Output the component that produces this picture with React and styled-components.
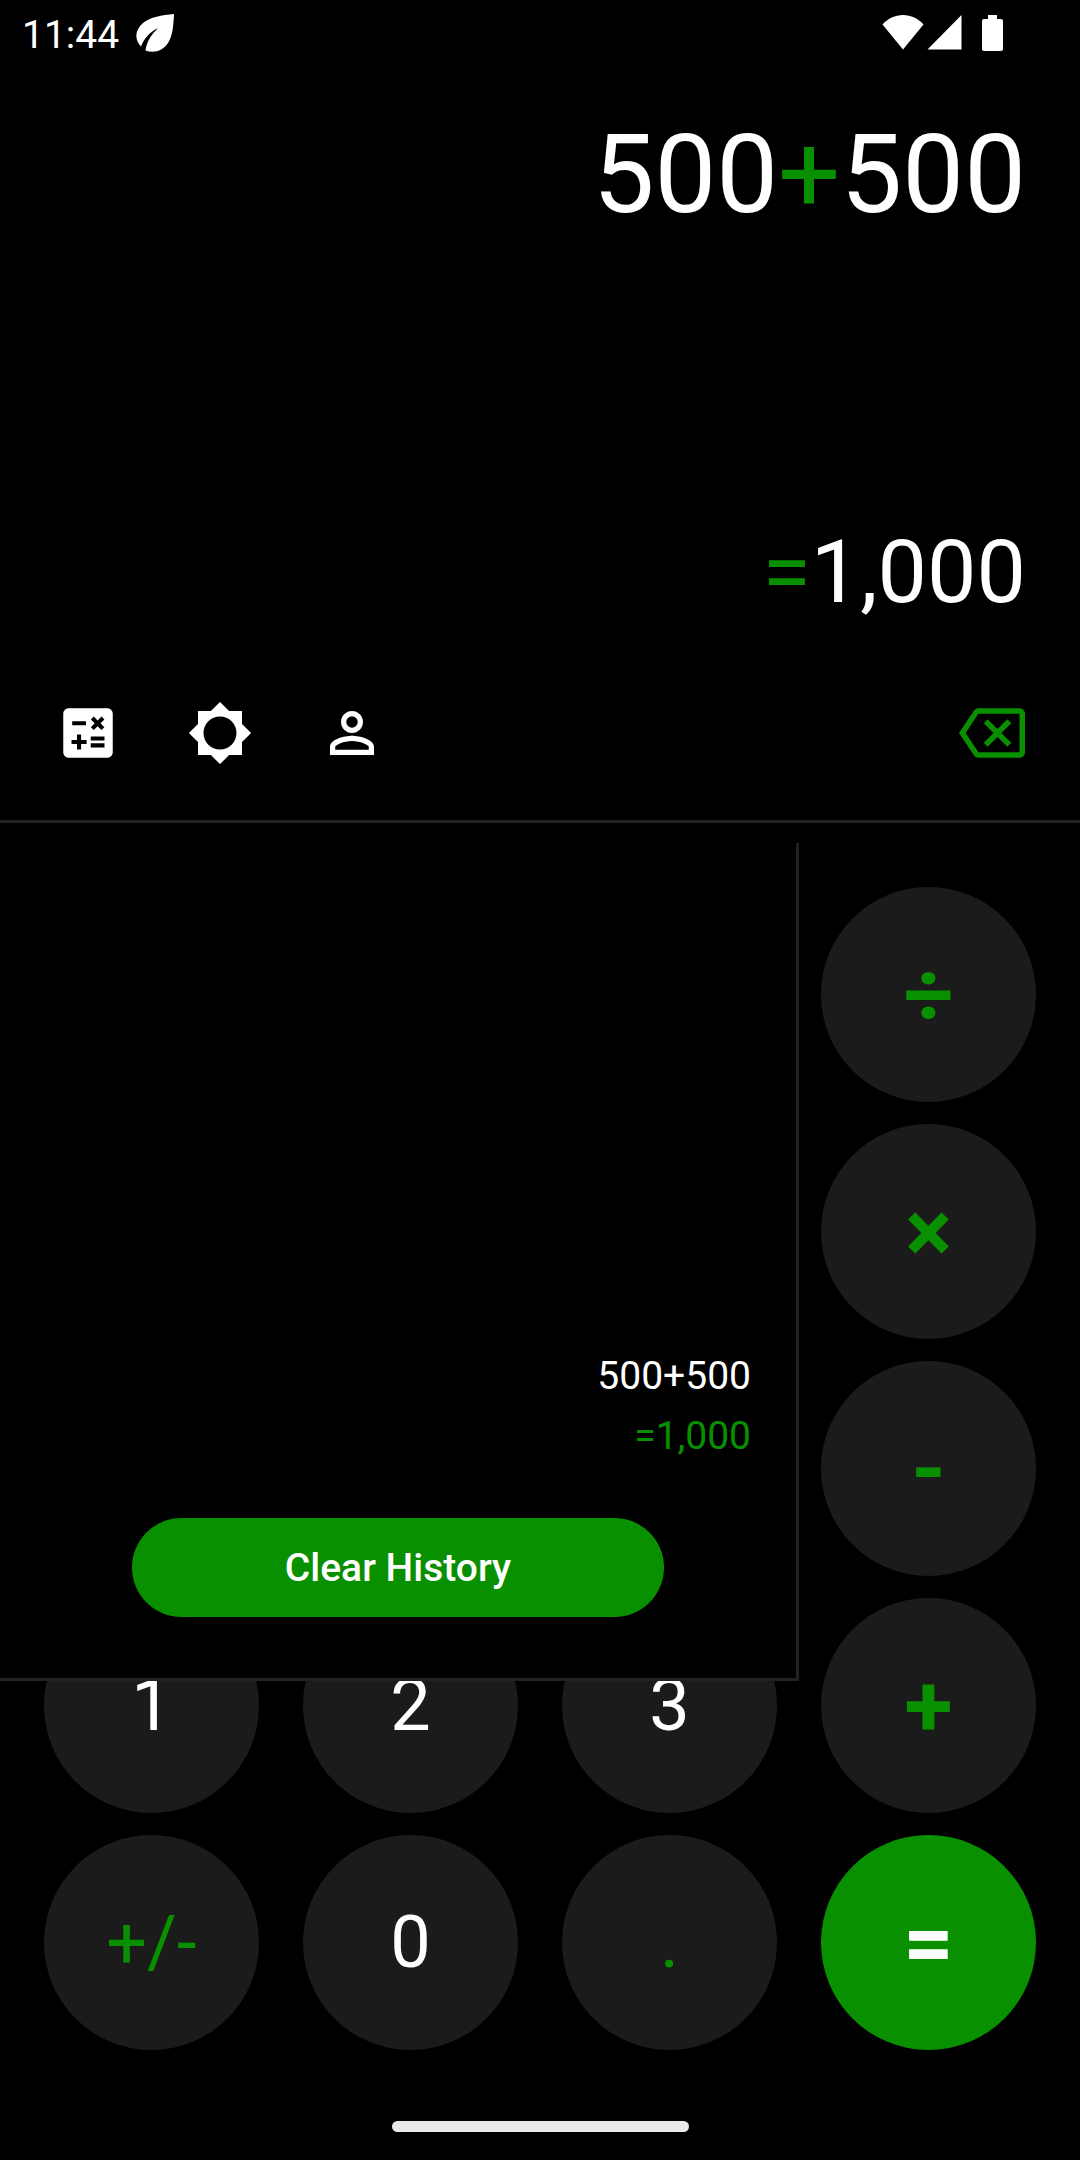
import React from "react";
import styled, { createGlobalStyle } from "styled-components";
import {
  MdCalculate,
  MdBrightness5,
  MdPersonOutline,
  MdOutlineBackspace,
} from "react-icons/md";

const green = "#099000";
const line = "#212121";

const GlobalStyle = createGlobalStyle`
  * { box-sizing: border-box; }
  body {
    margin: 0;
    background: #000;
    color: #fff;
    font-family: Roboto, "Liberation Sans", sans-serif;
  }
  button {
    border: 0;
    padding: 0;
    margin: 0;
    background: none;
    color: inherit;
    font-family: inherit;
    cursor: pointer;
  }
`;

const Screen = styled.div`
  min-height: 100vh;
  display: flex;
  flex-direction: column;
  overflow: hidden;
`;

const StatusBar = styled.header`
  height: 66px;
  padding: 0 77px 0 22px;
  display: flex;
  align-items: center;
  justify-content: space-between;
`;

const StatusGroup = styled.div`
  display: flex;
  align-items: center;
  gap: ${(p) => p.$gap}px;
`;

const Clock = styled.time`
  padding-top: 4px;
  font-size: 39px;
  line-height: 46px;
`;

const Display = styled.section`
  padding: 44px 54px 0;
  display: flex;
  flex-direction: column;
  align-items: flex-end;
  gap: 280px;
`;

const Formula = styled.div`
  font-size: 110px;
  line-height: 130px;
`;

const Result = styled.output`
  font-size: 88px;
  line-height: 104px;
`;

const Accent = styled.span`
  color: ${green};
`;

const Toolbar = styled.nav`
  padding: 76px 55px 54px;
  display: flex;
  gap: 66px;
  border-bottom: 3px solid ${line};
`;

const ToolButton = styled.button`
  width: 66px;
  height: 66px;
  color: ${(p) => (p.$accent ? green : "#fff")};
  margin-left: ${(p) => (p.$accent ? "auto" : "0")};

  svg {
    display: block;
    width: 100%;
    height: 100%;
  }
`;

const KeypadArea = styled.main`
  position: relative;
  padding: 64px 44px 0;
`;

const Keypad = styled.div`
  display: grid;
  grid-template-columns: repeat(4, 1fr);
  gap: 22px 44px;
`;

const Key = styled.button`
  grid-column: ${(p) => p.$col};
  grid-row: ${(p) => p.$row};
  aspect-ratio: 1;
  border-radius: 50%;
  display: flex;
  align-items: center;
  justify-content: center;
  background: ${(p) => (p.$kind === "equals" ? green : "#1b1b1b")};
  color: ${(p) =>
    p.$kind === "sign" || p.$kind === "operator" ? green : "#fff"};
  font-size: ${(p) =>
    p.$kind === "operator" || p.$kind === "equals" ? 88 : 72}px;
  font-weight: ${(p) =>
    p.$kind === "operator" || p.$kind === "equals" ? 700 : 400};
  line-height: 88px;
`;

const HistoryPanel = styled.aside`
  position: absolute;
  top: 20px;
  left: 0;
  width: calc(75% - 11px);
  height: 838px;
  padding-bottom: 61px;
  display: flex;
  flex-direction: column;
  justify-content: flex-end;
  background: #000;
  border: solid ${line};
  border-width: 0 3px 3px 0;
`;

const HistoryList = styled.ul`
  margin: 0;
  padding: 0 45px 52px;
  list-style: none;
  text-align: right;
`;

const HistoryEntry = styled.li`
  display: flex;
  flex-direction: column;
  font-size: 39px;
  line-height: 60px;
`;

const ClearButton = styled.button`
  height: 99px;
  margin: 0 132px;
  border-radius: 50px;
  background: ${green};
  font-size: 39px;
  font-weight: 500;
  line-height: 46px;
`;

const GestureBar = styled.footer`
  padding: 71px 0 28px;
  display: flex;
  justify-content: center;
`;

const Handle = styled.div`
  width: 297px;
  height: 11px;
  border-radius: 6px;
  background: #eaeaea;
`;

const keys = [
  { label: "÷", name: "Divide", col: 4, row: 1, kind: "operator" },
  { label: "×", name: "Multiply", col: 4, row: 2, kind: "operator" },
  { label: "-", name: "Subtract", col: 4, row: 3, kind: "operator" },
  { label: "1", col: 1, row: 4, kind: "digit" },
  { label: "2", col: 2, row: 4, kind: "digit" },
  { label: "3", col: 3, row: 4, kind: "digit" },
  { label: "+", name: "Add", col: 4, row: 4, kind: "operator" },
  { label: "+/-", name: "Change sign", col: 1, row: 5, kind: "sign" },
  { label: "0", col: 2, row: 5, kind: "digit" },
  { label: ".", name: "Decimal point", col: 3, row: 5, kind: "sign" },
  { label: "=", name: "Equals", col: 4, row: 5, kind: "equals" },
];

const LeafIcon = () => (
  <svg width="38" height="38" viewBox="0 0 38 38" fill="#fff" aria-hidden="true">
    <path d="M38 0C26 1 14 3 7 9C-1 16-2 25 5 32.500C8 25 13 18.500 22 14C15 21 10.500 28 9.500 36.500C18 39.500 27 37 32 29C36.500 22 37.500 12 38 0Z" />
  </svg>
);

const WifiIcon = () => (
  <svg width="42" height="36" viewBox="0 0 42 36" fill="#fff" aria-hidden="true">
    <path d="M21 34.500L0.500 9.500C6 3.500 13 0 21 0S36 3.500 41.500 9.500Z" />
  </svg>
);

const SignalIcon = () => (
  <svg width="35" height="36" viewBox="0 0 35 36" fill="#fff" aria-hidden="true">
    <path d="M0.500 34.500L34.500 0V34.500Z" />
  </svg>
);

const BatteryIcon = () => (
  <svg width="21" height="36" viewBox="0 0 21 36" fill="#fff" aria-hidden="true">
    <path d="M6 0H15V4H19Q21 4 21 6V34Q21 36 19 36H2Q0 36 0 34V6Q0 4 2 4H6Z" />
  </svg>
);

export default function App() {
  return (
    <Screen>
      <GlobalStyle />
      <StatusBar>
        <StatusGroup $gap={17}>
          <Clock>11:44</Clock>
          <LeafIcon />
        </StatusGroup>
        <StatusGroup $gap={20}>
          <StatusGroup $gap={3}>
            <WifiIcon />
            <SignalIcon />
          </StatusGroup>
          <BatteryIcon />
        </StatusGroup>
      </StatusBar>

      <Display>
        <Formula>
          500<Accent>+</Accent>500
        </Formula>
        <Result>
          <Accent>=</Accent>1,000
        </Result>
      </Display>

      <Toolbar>
        <ToolButton aria-label="Calculator mode">
          <MdCalculate />
        </ToolButton>
        <ToolButton aria-label="Theme">
          <MdBrightness5 />
        </ToolButton>
        <ToolButton aria-label="Account">
          <MdPersonOutline />
        </ToolButton>
        <ToolButton $accent aria-label="Backspace">
          <MdOutlineBackspace />
        </ToolButton>
      </Toolbar>

      <KeypadArea>
        <Keypad>
          {keys.map((k) => (
            <Key
              key={k.label}
              $col={k.col}
              $row={k.row}
              $kind={k.kind}
              aria-label={k.name}
            >
              {k.label}
            </Key>
          ))}
        </Keypad>
        <HistoryPanel aria-label="History">
          <HistoryList>
            <HistoryEntry>
              <span>500+500</span>
              <Accent>=1,000</Accent>
            </HistoryEntry>
          </HistoryList>
          <ClearButton>Clear History</ClearButton>
        </HistoryPanel>
      </KeypadArea>

      <GestureBar>
        <Handle />
      </GestureBar>
    </Screen>
  );
}
